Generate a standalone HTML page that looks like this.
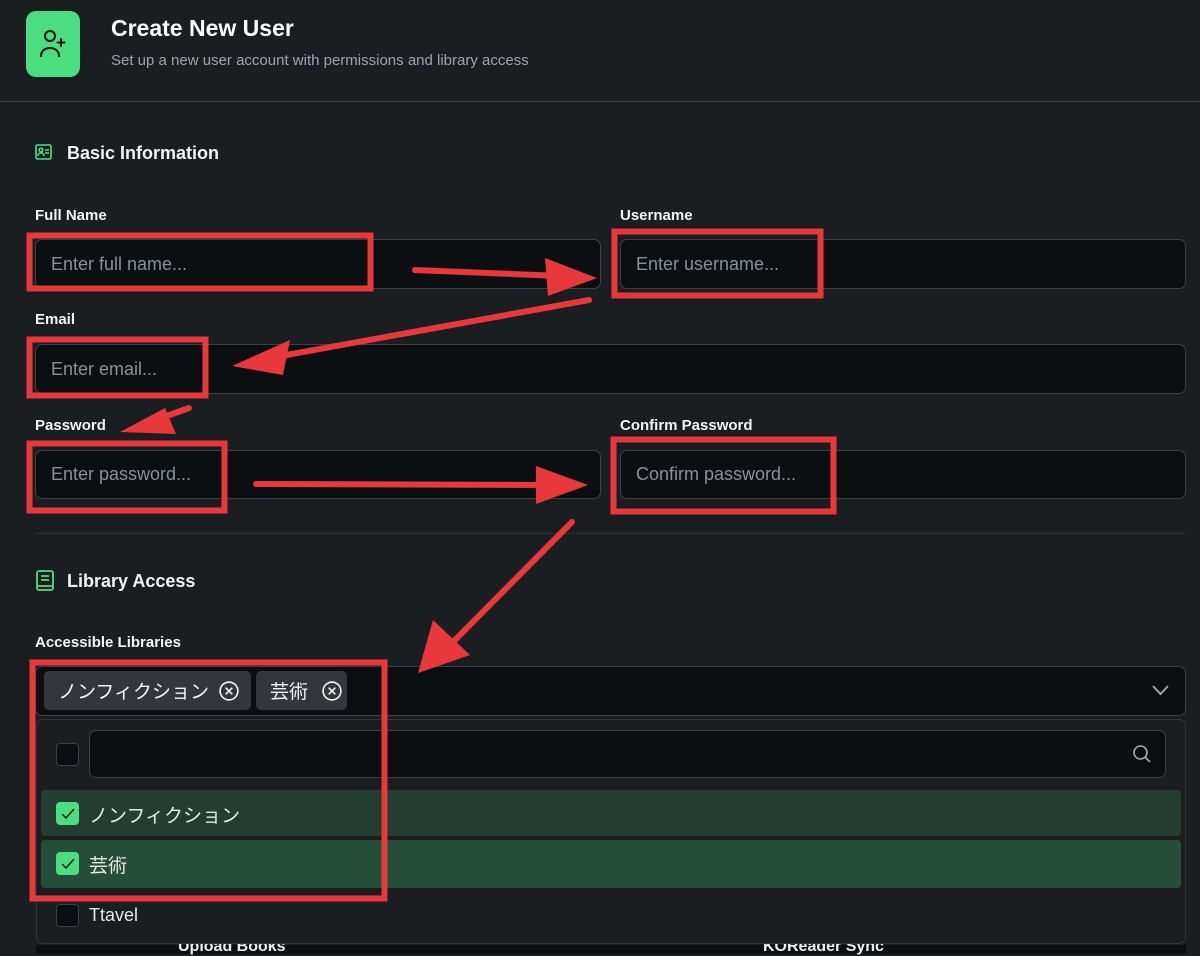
<!DOCTYPE html>
<html><head><meta charset="utf-8"><style>
*{box-sizing:border-box;margin:0;padding:0}
body{width:1200px;height:954px;overflow:hidden;background:#1b1e21;font-family:"Liberation Sans","Noto Sans CJK JP",sans-serif;color:#fff;position:relative}
.a{position:absolute}
.lbl{position:absolute;font-size:15px;font-weight:bold;color:#f3f4f6}
.inp{position:absolute;background:#0c0f12;border:1px solid #3b4046;border-radius:7px;color:#8b9097;font-size:18px;padding-left:15px;display:flex;align-items:center}
.h{position:absolute;font-size:18px;font-weight:bold;color:#f3f4f6}
.cb{position:absolute;width:23px;height:23px;border-radius:4px;border:1px solid #3b4046;background:#0c0f12}
.cbg{position:absolute;width:23px;height:23px;border-radius:4px;background:#4ade80}
.tag{position:absolute;top:671px;height:39px;background:#33373c;border-radius:5px;font-size:19px;color:#f3f4f6;display:flex;align-items:center;padding-left:14px}
</style></head><body>
<div class="a" style="left:26px;top:11px;width:54px;height:66px;background:#4ade80;border-radius:10px"></div>
<svg class="a" style="left:38px;top:29px" width="30" height="30" viewBox="0 0 30 30" fill="none" stroke="#111" stroke-width="2" stroke-linecap="round"><circle cx="12" cy="7" r="5"/><path d="M3 27c0-5 4-8 9-8s9 3 9 8"/><path d="M23 10v7M19.5 13.5h7"/></svg>
<div class="a" style="left:111px;top:15px;font-size:23px;font-weight:bold">Create New User</div>
<div class="a" style="left:111px;top:52px;font-size:15px;color:#9ca3af">Set up a new user account with permissions and library access</div>
<div class="a" style="left:0;top:101px;width:1200px;height:1px;background:#3a3f44"></div>
<svg class="a" style="left:35px;top:144px" width="17" height="16" viewBox="0 0 17 16" fill="none" stroke="#4ade80" stroke-width="1.6"><rect x="1" y="1" width="15" height="14" rx="1.5"/><circle cx="6" cy="6" r="1.8"/><path d="M3 12c0-2 1.5-3 3-3s3 1 3 3M10 6h4M10 9h4"/></svg>
<div class="h" style="left:67px;top:143px">Basic Information</div>
<div class="lbl" style="left:35px;top:207px">Full Name</div>
<div class="lbl" style="left:620px;top:207px">Username</div>
<div class="inp" style="left:35px;top:239px;width:566px;height:50px">Enter full name...</div>
<div class="inp" style="left:620px;top:239px;width:566px;height:50px">Enter username...</div>
<div class="lbl" style="left:35px;top:311px">Email</div>
<div class="inp" style="left:35px;top:344px;width:1151px;height:50px">Enter email...</div>
<div class="lbl" style="left:35px;top:417px">Password</div>
<div class="lbl" style="left:620px;top:417px">Confirm Password</div>
<div class="inp" style="left:35px;top:450px;width:566px;height:49px">Enter password...</div>
<div class="inp" style="left:620px;top:450px;width:566px;height:49px">Confirm password...</div>
<div class="a" style="left:35px;top:533px;width:1151px;height:1px;background:#2c3136"></div>
<svg class="a" style="left:36px;top:570px" width="18" height="21" viewBox="0 0 18 21" fill="none" stroke="#4ade80" stroke-width="1.8"><rect x="1" y="1" width="16" height="19" rx="2"/><path d="M5 6h8M5 10h8M1 16h16"/></svg>
<div class="h" style="left:67px;top:571px">Library Access</div>
<div class="lbl" style="left:35px;top:634px">Accessible Libraries</div>
<div class="inp" style="left:35px;top:666px;width:1151px;height:50px"></div>
<div class="tag" style="left:44px;width:207px">ノンフィクション<svg style="margin-left:10px" width="20" height="20" viewBox="0 0 18 18" fill="none" stroke="#eee" stroke-width="1.5"><circle cx="9" cy="9" r="8"/><path d="M6 6l6 6M12 6l-6 6"/></svg></div>
<div class="tag" style="left:256px;width:91px">芸術<svg style="margin-left:14px" width="20" height="20" viewBox="0 0 18 18" fill="none" stroke="#eee" stroke-width="1.5"><circle cx="9" cy="9" r="8"/><path d="M6 6l6 6M12 6l-6 6"/></svg></div>
<svg class="a" style="left:1152px;top:685px" width="17" height="11" viewBox="0 0 17 11" fill="none" stroke="#aaa" stroke-width="1.8"><path d="M1 1l7.5 8L16 1"/></svg>
<div class="a" style="left:36px;top:945px;width:1150px;height:9px;background:#0c0f12"></div>
<div class="a" style="left:178px;top:938px;font-size:16px;font-weight:bold;color:#eee">Upload Books</div>
<div class="a" style="left:763px;top:938px;font-size:16px;font-weight:bold;color:#eee">KOReader Sync</div>
<div class="a" style="left:36px;top:719px;width:1150px;height:225px;border:1px solid #30353a;border-radius:7px;background:#1b1e21"></div>
<div class="cb" style="left:56px;top:743px"></div>
<div class="inp" style="left:89px;top:730px;width:1077px;height:48px"></div>
<svg class="a" style="left:1132px;top:744px" width="20" height="20" viewBox="0 0 20 20" fill="none" stroke="#aaa" stroke-width="1.6"><circle cx="8.5" cy="8.5" r="6.5"/><path d="M13.5 13.5L18 18"/></svg>
<div class="a" style="left:41px;top:790px;width:1140px;height:46px;background:#233d30;border-radius:4px"></div>
<div class="a" style="left:41px;top:840px;width:1140px;height:48px;background:#264d38;border-radius:4px"></div>
<div class="cbg" style="left:56px;top:802px"></div>
<div class="cbg" style="left:56px;top:852px"></div>
<svg class="a" style="left:58px;top:806px" width="20" height="16" viewBox="0 0 20 16" fill="none" stroke="#111" stroke-width="1.4"><path d="M4 8l4 4 8-9"/></svg>
<svg class="a" style="left:58px;top:856px" width="20" height="16" viewBox="0 0 20 16" fill="none" stroke="#111" stroke-width="1.4"><path d="M4 8l4 4 8-9"/></svg>
<div class="a" style="left:89px;top:801px;font-size:19px;color:#e5e7eb">ノンフィクション</div>
<div class="a" style="left:89px;top:851px;font-size:19px;color:#e5e7eb">芸術</div>
<div class="cb" style="left:56px;top:904px"></div>
<div class="a" style="left:89px;top:905px;font-size:18px;color:#e5e7eb">Ttavel</div>
<svg class="a" style="left:0;top:0" width="1200" height="954" fill="none" stroke="#e8383b" stroke-width="6">
<rect x="29.5" y="235.5" width="341" height="53"/>
<rect x="614.5" y="231.5" width="206" height="64"/>
<rect x="29.5" y="339.5" width="176" height="56"/>
<rect x="29.5" y="443.5" width="195" height="67"/>
<rect x="613.5" y="439.5" width="220" height="72"/>
<rect x="32.5" y="662.5" width="352" height="236"/>
<g stroke-width="6" stroke-linecap="round"><path d="M415 270L560 276"/><path d="M589 300L270 358"/><path d="M189 408L150 422"/><path d="M256 484L550 485"/><path d="M572 522L450 645"/></g>
<g fill="#e8383b" stroke="none"><path d="M597 278L545 258L548 296Z"/><path d="M232 366L290 340L283 375Z"/><path d="M120 432L165 408L176 434Z"/><path d="M588 485L536 466L536 504Z"/><path d="M418 673L433 620L470 655Z"/></g>
</svg>
</body></html>
